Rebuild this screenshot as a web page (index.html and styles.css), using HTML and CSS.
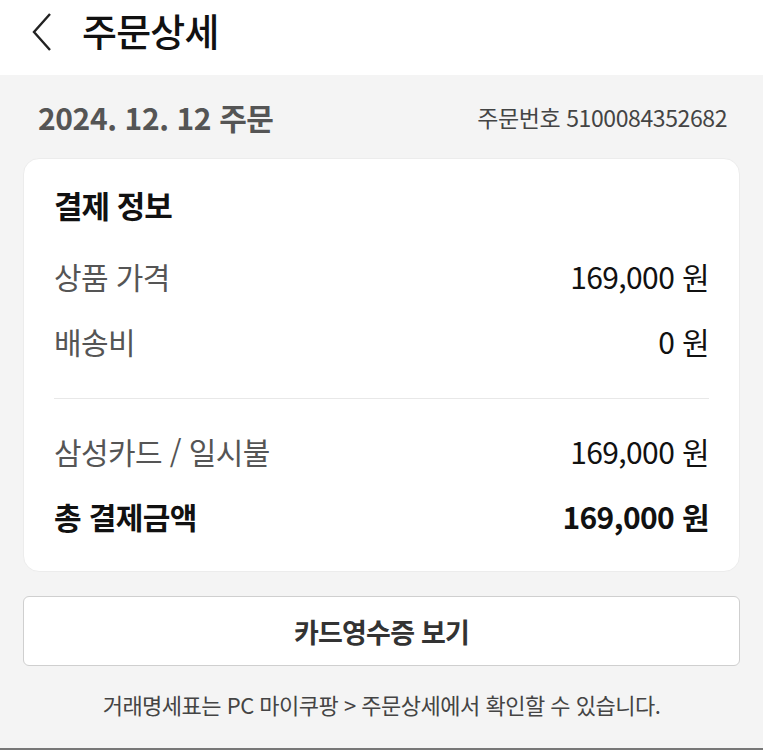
FILE: index.html
```html
<!DOCTYPE html>
<html lang="ko">
<head>
<meta charset="utf-8">
<link rel="stylesheet" href="styles.css">
</head>
<body>
<div class="page">
  <header class="topbar">
    <svg class="back" width="22" height="40" viewBox="0 0 22 40"><path d="M19 2 L3 20 L19 38" fill="none" stroke="#222" stroke-width="2.4"/></svg>
    <h1 class="title">주문상세</h1>
  </header>
  <main class="content">
    <div class="orderline">
      <span class="date">2024. 12. 12 주문</span>
      <span class="orderno">주문번호 5100084352682</span>
    </div>
    <section class="card">
      <h2 class="card-title">결제 정보</h2>
      <div class="row"><span class="label">상품 가격</span><span class="value">169,000 원</span></div>
      <div class="row"><span class="label">배송비</span><span class="value">0 원</span></div>
      <div class="divider"></div>
      <div class="row"><span class="label">삼성카드 / 일시불</span><span class="value">169,000 원</span></div>
      <div class="row total"><span class="label">총 결제금액</span><span class="value">169,000 원</span></div>
    </section>
    <button class="receipt">카드영수증 보기</button>
    <p class="note">거래명세표는 PC 마이쿠팡 &gt; 주문상세에서 확인할 수 있습니다.</p>
  </main>
</div>
</body>
</html>
```
FILE: styles.css
```css
html, body {
  margin: 0;
  padding: 0;
  background: #f4f4f4;
  font-family: "Noto Sans CJK KR", "Noto Sans", sans-serif;
}
.page {
  width: 763px;
  height: 750px;
  overflow: hidden;
  background: #f4f4f4;
  border-bottom: 2px solid #777;
  box-sizing: border-box;
}
.topbar {
  height: 75px;
  background: #fff;
  display: flex;
  align-items: center;
  padding-left: 31px;
  box-sizing: border-box;
}
.back {
  display: block;
  margin-top: -12px;
}
.title {
  margin: -16px 0 0 29px;
  font-size: 38px;
  font-weight: 500;
  color: #111;
  letter-spacing: -0.8px;
}
.content {
  padding: 0 23px;
}
.orderline {
  display: flex;
  justify-content: space-between;
  align-items: center;
  height: 83px;
  padding: 0 13px 0 15px;
}
.date {
  font-size: 30px;
  font-weight: 700;
  color: #555;
  letter-spacing: -0.4px;
}
.orderno {
  font-size: 23px;
  color: #444;
  letter-spacing: -0.4px;
}
.card {
  background: #fff;
  border-radius: 16px;
  border: 1px solid #ececec;
  padding: 23px 30px 22px 30px;
  height: 414px;
  box-sizing: border-box;
}
.card-title {
  margin: 0 0 16px;
  font-size: 31px;
  font-weight: 700;
  color: #111;
  letter-spacing: -1px;
}
.row {
  display: flex;
  justify-content: space-between;
  align-items: center;
  height: 65px;
  font-size: 30px;
  letter-spacing: -0.6px;
}
.label { color: #555; }
.value { color: #111; }
.total .label, .total .value {
  font-weight: 700;
  color: #111;
}
.divider {
  height: 1px;
  background: #e8e8e8;
  margin: 25px 0 19px;
}
.receipt {
  display: block;
  width: 100%;
  height: 70px;
  margin-top: 24px;
  background: #fff;
  border: 1px solid #cfcfcf;
  border-radius: 6px;
  font-family: inherit;
  font-size: 27px;
  font-weight: 700;
  color: #333;
  letter-spacing: -0.8px;
}
.note {
  margin: 22px 0 0;
  text-align: center;
  font-size: 22px;
  color: #444;
  letter-spacing: -0.5px;
}
```
